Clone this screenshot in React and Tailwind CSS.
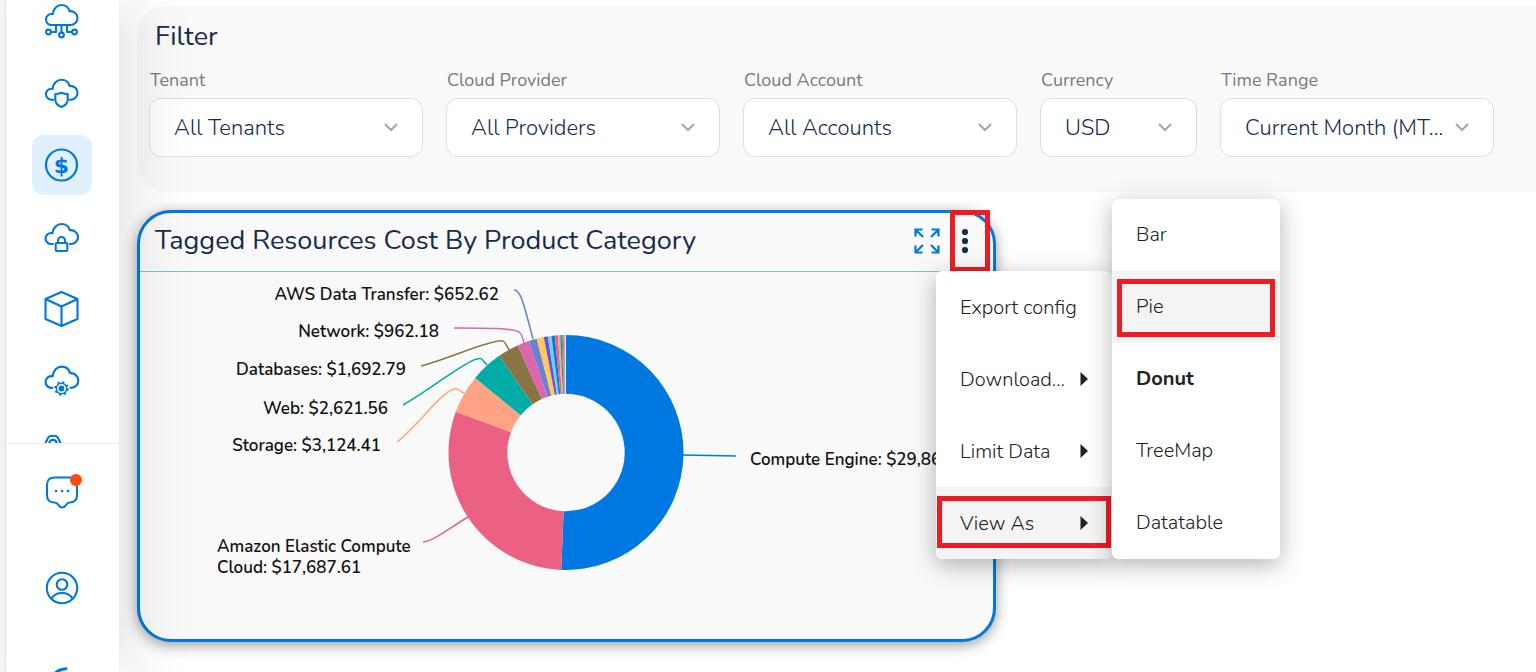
import React, { useState } from 'react';
import clsx from 'clsx';

const CLOUD = 'H7.5a5.5 5.5 0 0 1 0-11q.6 0 1.2.2C9 6 13 2 17.5 2c3.8 0 7 2.4 8 6.2 4.5-.4 8 2.8 8 6.8s-3 7-7 7H';

function Icon({ children }) {
  return (
    <svg viewBox="0 0 36 36" className="size-9" fill="none" stroke="#0078e1" strokeWidth="2.1" strokeLinecap="round" strokeLinejoin="round">
      {children}
    </svg>
  );
}

const navItems = [
  {
    label: 'Cloud network',
    icon: (
      <Icon>
        <path d={`M11 22${CLOUD}11`} />
        <path d="M12 23v6H7M17.5 23v6.5M23 23v6h5" strokeLinecap="butt" />
        <circle cx="4.5" cy="29" r="2.4" />
        <circle cx="17.5" cy="32" r="2.4" />
        <circle cx="30.5" cy="29" r="2.4" />
      </Icon>
    ),
  },
  {
    label: 'Cloud security',
    icon: (
      <Icon>
        <path transform="translate(0 2.7)" d={`M9.5 22${CLOUD}25.5`} />
        <path d="M17.5 17.7q3 1.3 6.2 1.3v5.500c0 3.600-2.400 6-6.200 7.500-3.800-1.500-6.200-3.900-6.200-7.500V19q3.200 0 6.200-1.300Z" />
      </Icon>
    ),
  },
  {
    label: 'Cost',
    icon: (
      <Icon>
        <circle cx="17.5" cy="18" r="15.500" strokeWidth="2.200" />
        <text x="17.5" y="25.800" textAnchor="middle" fontSize="22" fontWeight="700" fontFamily="DejaVu Sans, sans-serif" fill="#0078e1" stroke="none">$</text>
      </Icon>
    ),
  },
  {
    label: 'Access',
    icon: (
      <Icon>
        <path transform="translate(-.5 3) scale(1.030 1)" d={`M9 22${CLOUD}25.5`} />
        <rect x="11.700" y="24" width="11.600" height="8" rx="1" />
        <path d="M14 24v-2.500a3.500 3.500 0 0 1 7 0V24" />
      </Icon>
    ),
  },
  {
    label: 'Resources',
    icon: (
      <Icon>
        <path d="M17.5 1 33.500 8v20l-16 7-16-7V8ZM1.500 8l16 7.500 16-7.500M17.5 15.500V35" />
      </Icon>
    ),
  },
  {
    label: 'Cloud operations',
    icon: (
      <Icon>
        <path transform="translate(-.5 1.500) scale(1.040 1.060)" d={`M8.500 22${CLOUD}26`} />
        <circle cx="17.5" cy="25.500" r="5.200" strokeWidth="1.400" />
        <circle cx="17.5" cy="25.500" r="6.400" strokeWidth="1.800" strokeDasharray="2.200 2.827" strokeLinecap="butt" />
        <circle cx="17.5" cy="25.500" r="2.900" fill="#0078e1" stroke="none" />
      </Icon>
    ),
  },
  {
    label: 'Integrations',
    icon: (
      <Icon>
        <path d="M1 9 4 3Q5 1 7 1h4q2 0 3 2l3 6M5 9C6 3.500 12 3.500 13 9" />
      </Icon>
    ),
  },
];

const filters = [
  { id: 'tenant', label: 'Tenant', value: 'All Tenants' },
  { id: 'provider', label: 'Cloud Provider', value: 'All Providers' },
  { id: 'account', label: 'Cloud Account', value: 'All Accounts' },
  { id: 'currency', label: 'Currency', value: 'USD', narrow: true },
  { id: 'range', label: 'Time Range', value: 'Current Month (MT...' },
];

const slices = [
  { value: 29865, color: '#0078e1' },
  { value: 17687.61, color: '#ec6083' },
  { value: 3124.41, color: '#ffa384' },
  { value: 2621.56, color: '#00aca5' },
  { value: 1692.79, color: '#8b7443' },
  { value: 962.18, color: '#dc65ae' },
  { value: 652.62, color: '#6a80d0' },
  { value: 580, color: '#ffca5c' },
  { value: 330, color: '#6752dc' },
  { value: 295, color: '#74cfe6' },
  { value: 260, color: '#0078e1' },
  { value: 245, color: '#ec6083' },
  { value: 180, color: '#ffa384' },
  { value: 130, color: '#00aca5' },
  { value: 82, color: '#8b7443' },
  { value: 82, color: '#dc65ae' },
  { value: 82, color: '#9a9ab8' },
  { value: 100, color: '#e4e4e8' },
];

const chartLabels = [
  { x: 499, y: 300, anchor: 'end', lines: ['AWS Data Transfer: $652.62'], color: '#6a80d0', line: 'M514 290C521 290 524 305 533 339' },
  { x: 439, y: 337, anchor: 'end', lines: ['Network: $962.18'], color: '#dc65ae', line: 'M454 328C490 328 511 328 519 332Q522 334 524 343' },
  { x: 406, y: 375, anchor: 'end', lines: ['Databases: $1,692.79'], color: '#8b7443', line: 'M421 366C450 358 485 342 499 341C505 340 505 343 509 350' },
  { x: 388, y: 414, anchor: 'end', lines: ['Web: $2,621.56'], color: '#00aca5', line: 'M403 405C430 390 465 361 477 359C482 357 482 360 487 365' },
  { x: 381, y: 451, anchor: 'end', lines: ['Storage: $3,124.41'], color: '#ffa384', line: 'M397 442C417 427 440 393 454 389C458 388 460 391 464 393' },
  { x: 217, y: 552, anchor: 'start', lines: ['Amazon Elastic Compute', 'Cloud: $17,687.61'], color: '#ec6083', line: 'M423 542C434 541 448 529 468 517' },
  { x: 750, y: 465, anchor: 'start', lines: ['Compute Engine: $29,86'], color: '#0078e1', line: 'M683 455L736 456' },
];

const menuItems = [
  { label: 'Export config' },
  { label: 'Download...', sub: true },
  { label: 'Limit Data', sub: true },
  { label: 'View As', sub: true },
];

const views = ['Bar', 'Pie', 'Donut', 'TreeMap', 'Datatable'];

function Donut() {
  const total = slices.reduce((sum, s) => sum + s.value, 0);
  const cx = 566;
  const cy = 452.5;
  const point = (r, a) => `${cx + r * Math.sin(a)} ${cy - r * Math.cos(a)}`;
  let angle = 0;

  return slices.map((s, i) => {
    const start = angle;
    angle += (s.value / total) * Math.PI * 2;
    const large = angle - start > Math.PI ? 1 : 0;
    return (
      <path
        key={i}
        fill={s.color}
        d={`M${point(117.5, start)}A117.5 117.5 0 ${large} 1 ${point(117.5, angle)}L${point(58.7, angle)}A58.7 58.7 0 ${large} 0 ${point(58.7, start)}Z`}
      />
    );
  });
}

function Sidebar() {
  const [active, setActive] = useState('Cost');

  return (
    <aside className="relative z-10 ml-[5px] flex w-[114px] shrink-0 flex-col border-l border-[#e2e2e2] bg-white shadow-[20px_0_60px_rgba(0,0,0,0.1)]">
      <nav className="flex min-h-0 flex-1 flex-col items-center overflow-hidden border-b border-[#ededed] pr-0.5">
        <div className="-mt-[9px] flex flex-col gap-3">
          {navItems.map((item) => (
            <button
              key={item.label}
              type="button"
              aria-label={item.label}
              onClick={() => setActive(item.label)}
              className={clsx('flex size-15 shrink-0 items-center justify-center rounded-xl', active === item.label && 'bg-[#e1f0ff]')}
            >
              {item.icon}
            </button>
          ))}
        </div>
      </nav>
      <div className="flex h-[228px] shrink-0 flex-col items-center gap-[61px] overflow-hidden pt-[29px] pr-0.5">
        <button type="button" aria-label="Messages" className="relative shrink-0">
          <Icon>
            <path d="M10.500 4.500h15.500c4.500 0 7 2.500 7 7v10.500c0 5-2.500 7.500-7.500 7.500-4 0-3 5-7.200 5s-3.200-5-7.800-5c-5 0-7.500-2.500-7.500-7.500V12c0-5 2.500-7.500 7.500-7.500Z" />
            <path d="M12 18h.1M18 18h.1M24 18h.1" strokeWidth="2.600" />
          </Icon>
          <span className="absolute top-px -right-0.5 size-3 rounded-full bg-[#ff4b00]" />
        </button>
        <button type="button" aria-label="Account" className="shrink-0">
          <Icon>
            <circle cx="18" cy="18" r="15.200" />
            <circle cx="18" cy="14.500" r="5.300" />
            <path d="M7.500 28.500c2.500-4 6-5.500 10.500-5.500s8 1.500 10.500 5.500" />
          </Icon>
        </button>
        <button type="button" aria-label="Help" className="shrink-0">
          <Icon>
            <path d="M22 1.800C17 2 12 4.500 8 9" strokeWidth="3" />
          </Icon>
        </button>
      </div>
    </aside>
  );
}

function Filters() {
  return (
    <section className="rounded-l-[30px] bg-[#f9f9f9] px-3 pt-3 pb-[35px]">
      <h2 className="ml-[6px] text-[27px] leading-[38px] text-[#172b4d]">Filter</h2>
      <div className="mt-3 flex gap-[23px]">
        {filters.map((f) => (
          <div key={f.id} className={clsx('relative shrink-0', f.narrow ? 'w-[157px]' : 'w-[274px]')}>
            <label htmlFor={f.id} className="mb-[6px] ml-px block text-lg leading-6 text-[#7a7a7a]">{f.label}</label>
            <select
              id={f.id}
              className="h-[59px] w-full appearance-none rounded-xl border border-[#dedede] bg-white pt-0.5 pl-6 text-[22px] font-light text-[#172b4d]"
            >
              <option>{f.value}</option>
            </select>
            <svg viewBox="0 0 14 9" className="pointer-events-none absolute right-[25px] bottom-[25px] w-[14px]" fill="none" stroke="#a6a6a6" strokeWidth="2">
              <path d="m1 1 6 6 6-6" />
            </svg>
          </div>
        ))}
      </div>
    </section>
  );
}

function Menus() {
  return (
    <>
      <div role="menu" className="absolute top-[58px] left-[796px] w-44 rounded-md bg-white shadow-[0_6px_24px_rgba(0,0,0,0.3)]">
        {menuItems.map((item) => (
          <button
            key={item.label}
            type="button"
            role="menuitem"
            className={clsx(
              'relative flex h-18 w-full items-center justify-between px-6 pt-0.5 text-xl font-light text-[#212121]',
              item.label === 'View As' && 'rounded-b-md bg-[#f4f4f4]'
            )}
          >
            <span className="whitespace-nowrap">{item.label}</span>
            {item.sub && (
              <svg viewBox="0 0 8 14" className="mb-0.5 w-2 shrink-0" fill="#212121">
                <path d="M.5 0 8 7 .5 14Z" />
              </svg>
            )}
            {item.label === 'View As' && <span className="absolute inset-x-px top-[9px] bottom-[11px] border-5 border-[#ed1c24]" />}
          </button>
        ))}
      </div>
      <div role="menu" className="absolute -top-[14px] left-[972px] w-42 rounded-md bg-white shadow-[0_6px_24px_rgba(0,0,0,0.3)]">
        {views.map((view) => (
          <button
            key={view}
            type="button"
            role="menuitem"
            className={clsx(
              'relative flex h-18 w-full items-center px-6 text-xl text-[#212121]',
              view === 'Donut' ? 'font-bold' : 'font-light',
              view === 'Pie' && 'bg-[#f4f4f4]'
            )}
          >
            {view}
            {view === 'Pie' && <span className="absolute inset-x-[5px] top-2 bottom-[6px] border-5 border-[#ed1c24]" />}
          </button>
        ))}
      </div>
    </>
  );
}

function CostCard() {
  const [open, setOpen] = useState(true);

  return (
    <section className="relative mt-[18px] w-[859px] rounded-[34px] border-3 border-[#0078e1] bg-[#f9f9f9] pb-px shadow-[0_3px_14px_rgba(0,0,0,0.4)]">
      <header className="flex items-center border-b border-[#86baeb] pr-[3px] pl-[15px]">
        <h2 className="flex-1 pb-0.5 text-[27px] leading-[56px] text-[#172b4d]">Tagged Resources Cost By Product Category</h2>
        <button type="button" aria-label="Expand" className="mr-[10px] pb-0.5">
          <svg viewBox="0 0 26 26" className="size-[26px]" fill="none" stroke="#0078e1" strokeWidth="2.200">
            <path d="M1.500 8.500v-7h7M2 2l7 7M17.5 1.500h7v7M24 2l-7 7M1.500 17.5v7h7M2 24l7-7M24.500 17.5v7h-7M24 24l-7-7" />
          </svg>
        </button>
        <button
          type="button"
          aria-label="More options"
          onClick={() => setOpen(!open)}
          className="-mt-[3px] -mb-px flex h-[62px] w-10 items-center border-5 border-[#ed1c24] pl-[6px]"
        >
          <svg viewBox="0 0 8 26" className="h-[26px] w-2" fill="#172b4d">
            <circle cx="4" cy="4" r="3.100" />
            <circle cx="4" cy="13" r="3.100" />
            <circle cx="4" cy="22" r="3.100" />
          </svg>
        </button>
      </header>
      <svg viewBox="140 272 853 366" className="block w-full" role="img" aria-label="Cost by product category">
        <Donut />
        {chartLabels.map((l) => (
          <g key={l.lines[0]}>
            <path d={l.line} fill="none" stroke={l.color} strokeWidth="1.500" />
            <text textAnchor={l.anchor} fontSize="17" fontWeight="600" fill="#111">
              {l.lines.map((t, i) => (
                <tspan key={t} x={l.x} y={l.y + i * 21}>{t}</tspan>
              ))}
            </text>
          </g>
        ))}
      </svg>
      {open && <Menus />}
    </section>
  );
}

export default function App() {
  return (
    <div className="flex h-screen overflow-hidden bg-[#f7f7f7] font-['Nunito','Lato',sans-serif]">
      <Sidebar />
      <main className="min-w-0 flex-1 bg-white pt-[6px] pl-[18px]">
        <Filters />
        <CostCard />
      </main>
    </div>
  );
}
